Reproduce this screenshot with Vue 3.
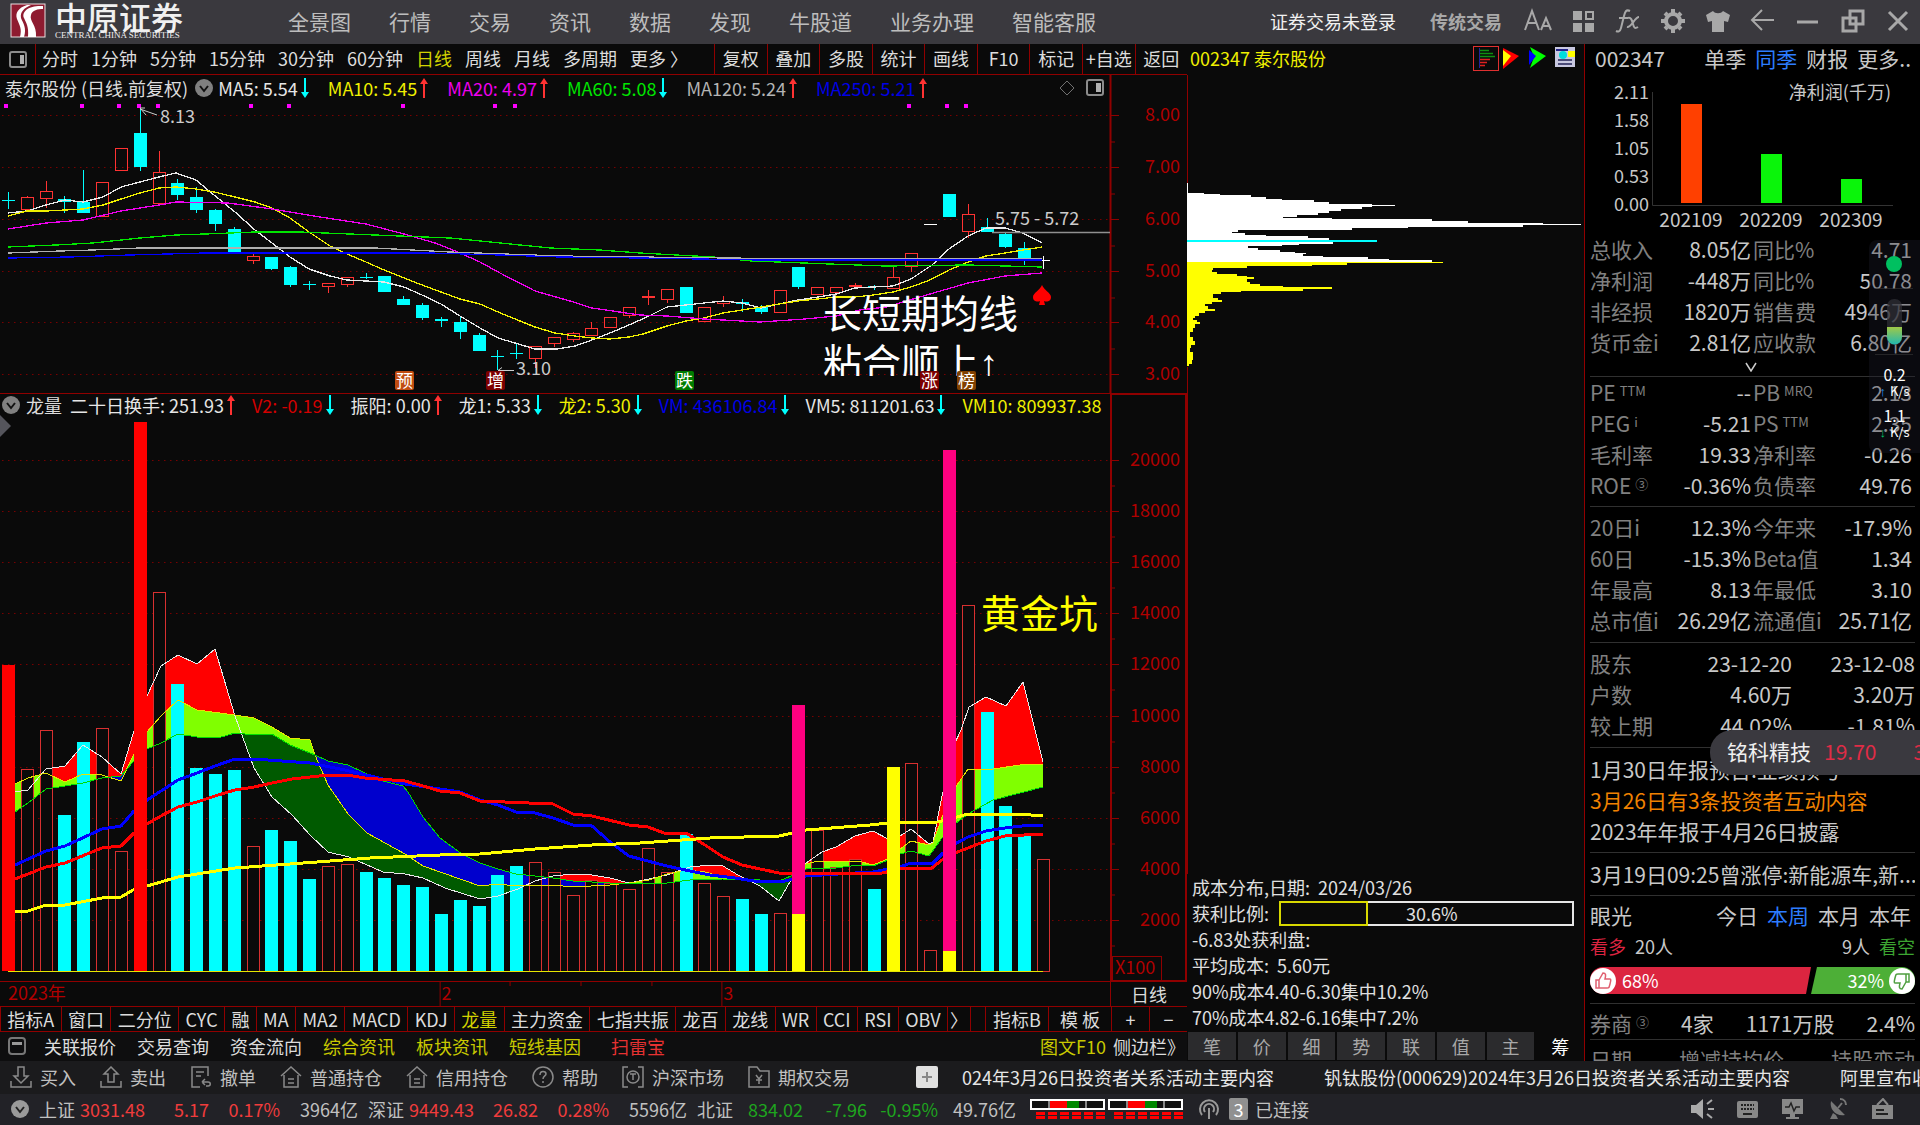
<script setup>
const nav = ['全景图', '行情', '交易', '资讯', '数据', '发现', '牛股道', '业务办理', '智能客服']
const periods = ['分时', '1分钟', '5分钟', '15分钟', '30分钟', '60分钟', '日线', '周线', '月线', '多周期', '更多 〉']
const tools = ['复权', '叠加', '多股', '统计', '画线', 'F10', '标记', '+自选', '返回']
const indicators = ['指标A', '窗口', '二分位', 'CYC', '融', 'MA', 'MA2', 'MACD', 'KDJ', '龙量', '主力资金', '七指共振', '龙百', '龙线', 'WR', 'CCI', 'RSI', 'OBV']
const sideTabs = ['笔', '价', '细', '势', '联', '值', '主', '筹']

const maLegend = [
  { text: 'MA5: 5.54', tone: 'white', dir: 'down' },
  { text: 'MA10: 5.45', tone: 'yellow', dir: 'up' },
  { text: 'MA20: 4.97', tone: 'magenta', dir: 'up' },
  { text: 'MA60: 5.08', tone: 'green', dir: 'down' },
  { text: 'MA120: 5.24', tone: 'gray', dir: 'up' },
  { text: 'MA250: 5.21', tone: 'blue', dir: 'up' }
]
const volLegend = [
  { text: '二十日换手: 251.93', tone: 'white', dir: 'up' },
  { text: 'V2: -0.19', tone: 'red', dir: 'down' },
  { text: '振阳: 0.00', tone: 'white', dir: 'up' },
  { text: '龙1: 5.33', tone: 'white', dir: 'down' },
  { text: '龙2: 5.30', tone: 'yellow', dir: 'down' },
  { text: 'VM: 436106.84', tone: 'blue', dir: 'down' },
  { text: 'VM5: 811201.63', tone: 'white', dir: 'down' },
  { text: 'VM10: 809937.38', tone: 'yellow', dir: '' }
]

const RED = '#ff3232'
const CYAN = '#00ffff'
const center = (i) => Math.round(8 + 18.82 * i)

/* kind, high, open/close top, open/close bottom, low */
const candles = [
  ['c', 192, 200, 201, 209], ['r', 196, 197, 210, 210], ['r', 181, 191, 199, 208], ['c', 196, 199, 202, 213],
  ['c', 170, 202, 213, 213], ['r', 182, 182, 217, 217], ['r', 148, 148, 171, 171], ['c', 108, 133, 167, 171],
  ['r', 151, 172, 204, 204], ['c', 179, 183, 195, 200], ['c', 187, 197, 210, 213], ['c', 209, 210, 224, 231],
  ['c', 227, 229, 252, 252], ['r', 254, 256, 261, 264], ['c', 257, 257, 269, 270], ['c', 266, 267, 285, 287],
  ['c', 281, 284, 285, 290], ['r', 283, 283, 287, 293], ['r', 277, 277, 285, 287], ['c', 273, 277, 278, 279],
  ['c', 276, 276, 292, 292], ['c', 296, 299, 305, 305], ['c', 303, 305, 318, 320], ['c', 317, 319, 321, 327],
  ['c', 317, 322, 332, 339], ['c', 333, 335, 351, 351], ['c', 350, 356, 357, 370], ['c', 344, 353, 354, 359],
  ['r', 346, 346, 359, 368], ['r', 337, 337, 344, 347], ['r', 332, 333, 340, 342], ['r', 322, 328, 336, 336],
  ['r', 317, 317, 328, 328], ['r', 307, 307, 316, 318], ['r', 290, 296, 298, 305], ['r', 289, 289, 300, 303],
  ['c', 287, 287, 313, 313], ['r', 307, 307, 322, 322], ['r', 296, 301, 304, 307], ['c', 299, 302, 304, 312],
  ['c', 305, 307, 312, 314], ['r', 290, 290, 313, 313], ['c', 267, 267, 287, 289], ['r', 287, 287, 295, 295],
  ['r', 287, 287, 293, 293], ['r', 283, 285, 287, 287], ['c', 285, 286, 287, 290], ['r', 266, 277, 289, 289],
  ['r', 253, 253, 267, 272], ['w', 225, 224, 225, 225], ['c', 194, 194, 217, 217], ['r', 204, 214, 232, 238],
  ['c', 218, 227, 232, 232], ['c', 232, 234, 247, 248], ['c', 242, 248, 258, 265], ['w', 256, 260, 261, 269]
].map(([kind, high, top, bottom, low], i) => ({
  x: center(i), kind, high, top, low, h: bottom - top, bottom,
  color: kind === 'r' ? RED : kind === 'c' ? CYAN : '#ffffff'
}))

const priceLines = [
  { color: '#e8e8e8', pts: '8,213 27,211 46,205 65,200 83,202 103,197 121,187 140,182 159,177 176,173 196,180 214,195 235,212 255,230 272,243 290,257 309,269 330,276 347,280 366,281 384,282 404,287 422,295 441,304 460,316 480,328 498,338 515,343 535,349 557,349 575,346 592,340 610,333 629,325 649,316 667,307 686,305 704,303 723,301 742,303 761,308 779,304 798,300 818,297 836,294 855,288 873,287 893,286 911,279 932,265 949,249 968,236 986,228 1005,228 1023,233 1042,243' },
  { color: '#f0f000', pts: '8,216 27,211 46,211 65,210 83,209 103,205 121,199 140,193 159,188 176,187 196,189 214,192 235,197 255,202 272,208 290,218 309,232 330,246 347,254 366,262 384,270 404,278 422,285 441,292 460,299 480,304 498,312 515,319 535,327 555,333 575,336 592,338 610,339 629,337 643,334 667,326 686,321 704,318 723,313 742,310 761,307 779,304 798,301 818,299 836,297 855,297 873,295 893,292 911,287 930,280 949,270 968,262 986,256 1005,253 1023,250 1042,247' },
  { color: '#f000f0', pts: '8,229 46,223 83,220 121,211 159,205 176,202 228,203 272,209 320,217 366,224 404,234 435,243 460,253 480,262 500,273 535,291 570,301 592,308 640,315 667,316 704,319 760,322 805,319 836,316 860,310 886,307 930,294 968,283 1005,276 1042,273' },
  { color: '#00e600', pts: '8,247 56,245 93,243 140,238 176,235 205,234 255,232 300,232 350,234 400,236 450,238 500,243 550,248 600,250 640,253 713,257 751,261 830,264 885,266 968,265 1042,267' },
  { color: '#b0b0b0', pts: '8,253 60,251 93,250 140,248 375,248 450,252 560,256 640,257 730,258 800,259 1042,259' },
  { color: '#0000ff', pts: '8,258 70,257 130,255 205,253 430,253 500,255 560,257 640,258 760,260 1042,260' }
]
const priceTicks = [[115, '8.00'], [167, '7.00'], [219, '6.00'], [271, '5.00'], [322, '4.00'], [374, '3.00']]
const dots = [6, 82, 119, 139, 158, 251, 289, 403, 495, 515, 909, 947, 966]
const badges = [[395, '预', '#c04c10'], [486, '增', '#7c0000'], [675, '跌', '#007c00'], [920, '涨', '#7c0000'], [957, '榜', '#804000']]

/* h hollow, c cyan, r red, y yellow, m magenta over yellow */
const bars = [
  ['r', 665], ['h', 769], ['h', 730], ['c', 815], ['c', 742], ['h', 728], ['h', 851], ['r', 422], ['h', 592], ['c', 684],
  ['c', 768], ['c', 774], ['c', 770], ['h', 846], ['c', 830], ['c', 841], ['c', 879], ['h', 866], ['h', 864], ['c', 872],
  ['c', 878], ['c', 885], ['c', 887], ['c', 914], ['c', 900], ['c', 906], ['c', 875], ['c', 866], ['h', 862], ['h', 872],
  ['h', 895], ['h', 880], ['h', 883], ['h', 889], ['h', 848], ['h', 872], ['c', 834], ['h', 883], ['h', 896], ['c', 899],
  ['c', 914], ['h', 913], ['m', 705, 914], ['h', 830], ['h', 867], ['h', 859], ['c', 889], ['y', 767], ['h', 763], ['h', 950],
  ['m', 450, 951], ['h', 605], ['c', 712], ['c', 806], ['c', 836], ['h', 859]
].map(([kind, top, split], i) => ({ kind, top, split, x: center(i) - 6 }))
const backBars = bars.filter((b) => b.kind === 'h' || b.kind === 'c')
const frontBars = bars.filter((b) => b.kind !== 'h' && b.kind !== 'c')
const solid = { r: '#ff0000', y: '#ffff00', m: '#ff0080' }

const fast = '15,792 28,790 46,769 65,766 83,745 102,757 121,774 133,734 147,696 161,666 178,655 197,664 215,649 235,716 254,768 272,797 292,815 310,835 328,852 349,857 383,872 405,874 423,878 445,888 480,899 498,896 518,889 535,881 553,876 573,874 592,875 610,878 629,883 649,879 667,875 690,867 710,865 723,866 738,875 760,886 779,901 791,880 806,863 822,852 836,847 855,836 873,831 888,839 900,836 911,829 929,844 933,842 942,796 955,743 961,730 969,707 986,697 1006,706 1023,682 1043,762'
const mid = '15,784 28,778 46,773 65,782 83,774 102,775 121,781 133,756 147,732 161,716 178,700 197,710 235,715 254,718 272,727 290,738 310,740 315,755 328,785 348,814 367,833 405,854 423,866 480,886 498,884 516,886 535,885 553,885 573,887 610,885 629,883 649,880 667,874 686,870 705,872 723,877 742,880 760,880 779,881 791,876 806,864 818,861 836,862 858,861 873,865 888,859 900,849 911,841 929,845 933,843 942,817 955,788 968,769 993,769 1020,765 1043,764'
const slow = '15,812 28,803 46,789 65,786 83,783 102,778 121,776 133,762 147,749 161,743 178,734 197,737 218,738 235,733 254,735 272,734 290,745 315,755 328,761 348,765 365,773 383,781 403,786 408,792 423,817 440,838 462,854 480,863 498,869 516,874 535,876 553,878 573,881 610,883 640,884 667,883 690,880 723,879 742,879 760,880 779,881 791,876 806,869 836,868 858,865 873,866 888,860 900,854 911,851 929,856 942,838 955,824 968,814 993,800 1020,793 1043,787'

const volLines = [
  { color: '#e8e8e8', w: 1, pts: fast },
  { color: '#e6e600', w: 1, pts: mid },
  { color: '#00dc00', w: 1, pts: slow },
  { color: '#0000ff', w: 3, pts: '15,865 46,851 65,846 102,829 121,826 133,812 147,800 161,791 178,780 197,773 215,766 235,759 268,760 310,763 345,770 383,779 405,784 440,789 460,792 480,800 498,805 516,812 535,813 553,818 573,825 592,826 610,842 629,856 640,859 667,866 690,871 710,875 735,878 760,882 785,881 806,876 838,874 873,872 888,869 900,867 911,863 932,864 942,854 955,844 968,837 986,831 1005,828 1030,825 1043,825' },
  { color: '#ff0000', w: 3, pts: '15,879 46,867 65,863 102,848 121,846 133,834 147,824 161,816 178,807 197,802 215,796 235,790 254,787 272,783 292,779 328,775 347,775 365,778 405,781 423,786 440,791 460,793 480,801 553,804 573,814 592,816 629,825 648,827 664,833 686,833 705,845 723,857 742,865 760,869 779,873 882,873 900,869 932,868 942,860 955,853 986,841 1005,836 1043,834' },
  { color: '#ffff00', w: 3, pts: '15,911 28,911 46,905 65,905 102,898 121,897 133,890 147,886 178,877 235,868 290,864 330,861 370,858 440,855 480,854 535,849 592,845 640,843 710,838 779,836 806,830 870,825 888,823 938,822 968,814 1018,814 1043,816' }
]

function sampler(str) {
  const p = str.split(' ').map((s) => s.split(',').map(Number))
  return (x) => {
    const k = p.findIndex((q) => q[0] >= x)
    if (k <= 0) return p[0][1]
    const [x0, y0] = p[k - 1]
    const [x1, y1] = p[k]
    return y0 + ((y1 - y0) * (x - x0)) / (x1 - x0)
  }
}

/* Ribbons between the three thin averages, one vertical stroke per pixel column */
const ribbons = { red: '', lime: '', blue: '', dark: '' }
const fa = sampler(fast)
const fb = sampler(mid)
const fc = sampler(slow)
for (let x = 15; x < 1043; x++) {
  const a = Math.round(fa(x))
  const b = Math.round(fb(x))
  const c = Math.round(fc(x))
  const col = (y0, y1) => `M${x + 0.5} ${y0}V${y1}`
  if (a < Math.min(b, c)) ribbons.red += col(a, Math.min(b, c))
  if (b < c) ribbons.lime += col(b, c)
  if (c < b) ribbons.blue += col(c, b)
  if (a > Math.max(b, c)) ribbons.dark += col(Math.max(b, c), a)
}
const volTicks = Array.from({ length: 10 }, (_, i) => ({ y: 460 + Math.round(51.1 * i), label: String(20000 - 2000 * i) }))

/* Cost distribution outline, stepped row by row */
function steps(rows) {
  return `M1187 ${rows[0][1]}` + rows.map(([x, y]) => `V${y}H${x}`).join('') + `V${rows[rows.length - 1][1] + 2}H1187Z`
}
const costWhite = steps([[1188, 183], [1188, 192], [1204, 193], [1220, 194], [1251, 195], [1266, 197], [1282, 199], [1314, 200], [1329, 202], [1372, 204], [1395, 205], [1372, 206], [1362, 207], [1341, 209], [1329, 211], [1318, 213], [1297, 215], [1283, 217], [1332, 218], [1432, 219], [1468, 221], [1543, 223], [1581, 224], [1523, 225], [1408, 227], [1352, 228], [1238, 230], [1232, 232], [1245, 233], [1266, 235], [1308, 236], [1329, 238], [1350, 240], [1333, 242], [1299, 244], [1282, 245], [1248, 246], [1258, 248], [1280, 250], [1295, 252], [1306, 253], [1303, 254], [1323, 256], [1368, 257], [1389, 259], [1432, 260]])
const costYellow = steps([[1443, 262], [1347, 263], [1312, 265], [1247, 266], [1213, 268], [1212, 270], [1217, 272], [1237, 274], [1247, 276], [1254, 277], [1247, 279], [1250, 282], [1260, 284], [1283, 286], [1332, 287], [1303, 289], [1241, 291], [1221, 292], [1213, 294], [1218, 298], [1222, 300], [1212, 302], [1205, 304], [1208, 306], [1215, 309], [1205, 311], [1199, 313], [1195, 316], [1193, 318], [1197, 320], [1200, 322], [1195, 324], [1193, 328], [1190, 332], [1193, 337], [1195, 341], [1191, 345], [1190, 348], [1193, 352], [1192, 360], [1189, 364]])

const finance = [
  ['总收入', '', '8.05亿', '同比%', '', '4.71'],
  ['净利润', '', '-448万', '同比%', '', '50.78'],
  ['非经损', '', '1820万', '销售费', '', '4946万'],
  ['货币金i', '', '2.81亿', '应收款', '', '6.80亿']
]
const ratios = [
  ['PE', 'TTM', '--', 'PB', 'MRQ', '2.13'],
  ['PEG', 'i', '-5.21', 'PS', 'TTM', '2.35'],
  ['毛利率', '', '19.33', '净利率', '', '-0.26'],
  ['ROE', '③', '-0.36%', '负债率', '', '49.76']
]
const market = [
  ['20日i', '', '12.3%', '今年来', '', '-17.9%'],
  ['60日', '', '-15.3%', 'Beta值', '', '1.34'],
  ['年最高', '', '8.13', '年最低', '', '3.10'],
  ['总市值i', '', '26.29亿', '流通值i', '', '25.71亿']
]
const holders = [['股东', '23-12-20', '23-12-08'], ['户数', '4.60万', '3.20万'], ['较上期', '44.02%', '-1.81%']]
const profit = [[1681, 104, '#ff4000', '202109'], [1761, 154, '#0af50a', '202209'], [1841, 179, '#0af50a', '202309']]

const trades = [['buy', '买入'], ['sell', '卖出'], ['cancel', '撤单'], ['home', '普通持仓'], ['home', '信用持仓'], ['help', '帮助'], ['market', '沪深市场'], ['option', '期权交易']]
const indices = [
  ['上证', '3031.48', '5.17', '0.17%', '3964亿', 'up'],
  ['深证', '9449.43', '26.82', '0.28%', '5596亿', 'up'],
  ['北证', '834.02', '-7.96', '-0.95%', '49.76亿', 'dn']
]
</script>

<template>
  <div class="app">
    <header class="top">
      <div class="brand">
        <svg width="36" height="35" viewBox="0 0 36 35">
          <rect x="1" y="1" width="34" height="33" fill="#8e1b30" stroke="#e8e0e0" stroke-width="1" />
          <path d="M33 3C20 2 11 8 14 15c2 5 5 8 4 19h8C27 22 19 18 21 12c1-5 7-6 12-6z" fill="#fff" />
          <path d="M17 2C8 5 5 10 7 16c3 7 5 10 3 18h4c3-9-1-14-3-19-1-6 3-10 10-13z" fill="#fff" />
        </svg>
        <div class="brand-text"><strong>中原证券</strong><small>CENTRAL CHINA SECURITIES</small></div>
      </div>
      <nav><button v-for="n in nav" :key="n">{{ n }}</button></nav>
      <div class="account"><button class="login">证券交易未登录</button><button class="classic">传统交易</button></div>
      <div class="sys">
        <button aria-label="字体"><svg width="30" height="26" viewBox="0 0 30 26"><path d="M2 22 9 3l7 19M5 15h8M18 22l5-12 5 12M20 18h6" /></svg></button>
        <button aria-label="布局"><svg width="24" height="26" viewBox="0 0 24 26"><path class="f" d="M2 3h9v9H2zM2 15h9v9H2zM14 15h9v9h-9z" /><path d="M15 4h7v7h-7z" /></svg></button>
        <button aria-label="公式"><svg width="26" height="26" viewBox="0 0 26 26"><path d="M15 3c-4-2-5 1-6 5L6 20c-1 4-3 4-5 3M4 10h9M13 10c3-1 4 2 5 6s2 5 5 3M24 9c-4 0-8 11-12 10" /></svg></button>
        <button aria-label="设置"><svg width="26" height="26" viewBox="0 0 26 26"><circle cx="13" cy="13" r="7" stroke-width="4" /><path stroke-width="4" d="M13 1v4M13 21v4M1 13h4M21 13h4M5 5l2 2M19 19l2 2M5 21l2-2M19 7l2-2" /></svg></button>
        <button aria-label="皮肤"><svg width="26" height="26" viewBox="0 0 26 26"><path class="f" d="M8 3c2 3 8 3 10 0l7 4-2 7-4-1v11H7V13l-4 1-2-7z" /></svg></button>
        <button aria-label="后退"><svg width="26" height="26" viewBox="0 0 26 26"><path d="M24 12H2M12 2 2 12l10 10" /></svg></button>
        <button aria-label="最小化"><svg width="24" height="26" viewBox="0 0 24 26"><path stroke-width="3" d="M1 14h21" /></svg></button>
        <button aria-label="还原"><svg width="24" height="26" viewBox="0 0 24 26"><path stroke-width="3" d="M9 3h13v13H9zM15 10H2v13h13z" /></svg></button>
        <button aria-label="关闭"><svg width="24" height="26" viewBox="0 0 24 26"><path stroke-width="3" d="m3 4 18 18M21 4 3 22" /></svg></button>
      </div>
    </header>

    <main class="body">
      <section class="charts">
        <div class="toolbar">
          <button class="pane" aria-label="分栏"><svg width="18" height="17" viewBox="0 0 18 17"><rect x="1" y="1" width="16" height="15" rx="2" fill="none" stroke="#8c8c8c" stroke-width="2" /><path d="M11 4h4v9h-4z" fill="#b0b0b0" /></svg></button>
          <div class="periods"><button v-for="p in periods" :key="p" :class="{ on: p === '日线' }">{{ p }}</button></div>
          <div class="tools"><button v-for="t in tools" :key="t">{{ t }}</button></div>
        </div>

        <div class="panel">
          <div class="legend price-legend">
            <span>泰尔股份 (日线.前复权)</span>
            <svg class="chev" width="18" height="18" viewBox="0 0 18 18"><circle cx="9" cy="9" r="9" fill="#808080" /><path d="m5 7 4 5 4-5" fill="none" stroke="#111" stroke-width="2" /></svg>
            <span v-for="m in maLegend" :key="m.text" :class="['val', m.tone]">{{ m.text }}<svg width="8" height="20" viewBox="0 0 8 20"><path v-if="m.dir === 'up'" d="M4 0 8 6H5v14H3V6H0z" fill="#ff3232" /><path v-else d="M4 20 8 14H5V0H3v14H0z" fill="#00ffff" /></svg></span>
            <svg class="tail" width="46" height="18" viewBox="0 0 46 18"><path d="m9 2 7 7-7 7-7-7z" fill="none" stroke="#707070" /><rect x="29" y="1" width="16" height="15" rx="2" fill="none" stroke="#8c8c8c" stroke-width="2" /><path d="M38 4h5v9h-5z" fill="#b0b0b0" /></svg>
          </div>
          <svg class="plot" viewBox="0 75 1187 318">
            <defs><clipPath id="note"><path d="M0 75h1110v301H0z" /></clipPath></defs>
            <g stroke="#780000" stroke-dasharray="1.5 4.5">
              <path v-for="t in priceTicks" :key="t[1]" :d="`M2 ${t[0] + .5}H1108`" />
            </g>
            <path d="M1110.5 75V393" stroke="#900000" stroke-width="2" />
            <g v-for="t in priceTicks" :key="t[1]">
              <path :d="`M1111 ${t[0] + .5}h8`" stroke="#900000" />
              <path v-if="t[0] < 374" :d="`M1111 ${t[0] + 27}h4`" stroke="#900000" />
              <text x="1180" :y="t[0] + 6" text-anchor="end" fill="#b00000">{{ t[1] }}</text>
            </g>
            <rect v-for="d in dots" :key="d" :x="d - 2" y="104" width="4" height="4" fill="#ff00ff" />
            <g shape-rendering="crispEdges">
              <g v-for="(c, i) in candles" :key="i">
                <path :d="`M${c.x + .5} ${c.high}V${c.top}M${c.x + .5} ${c.bottom}V${c.low}`" :stroke="c.color" />
                <rect v-if="c.kind === 'r' && c.h > 2" :x="c.x - 5.5" :y="c.top + .5" width="12" :height="c.h - 1" fill="none" :stroke="c.color" />
                <rect v-else :x="c.x - 6" :y="c.top" width="13" :height="c.h" :fill="c.color" />
              </g>
            </g>
            <polyline v-for="l in priceLines" :key="l.color" :points="l.pts" fill="none" :stroke="l.color" stroke-width="1.3" shape-rendering="crispEdges" />
            <path d="M992 232.500H1110" stroke="#909090" stroke-width="1.500" />
            <path d="M140 108l6 7m-6-7h5m-5 1 17 6M514 370.500h-16m4-3-4 3 4 3" fill="none" stroke="#ccc" />
            <g fill="#ccc"><text x="160" y="123">8.13</text><text x="516" y="375">3.10</text><text x="995" y="225">5.75 - 5.72</text></g>
            <path d="M1042 285c2 5 9 8 9 12 0 5-5 5-7 4l1 4h-6l1-4c-2 1-7 1-7-4 0-4 7-7 9-12z" fill="#f00" />
            <g clip-path="url(#note)" class="big" fill="#fff"><text x="823" y="328">长短期均线</text><text x="823" y="377">粘合顺上<tspan class="arrow">↑</tspan></text></g>
            <g v-for="b in badges" :key="b[1]">
              <rect :x="b[0]" y="371" width="19" height="19" rx="2" :fill="b[2]" />
              <text class="badge" :x="b[0] + 1" y="387" fill="#fff">{{ b[1] }}</text>
            </g>
          </svg>
        </div>

        <div class="panel">
          <div class="legend vol-legend">
            <svg class="chev" width="18" height="18" viewBox="0 0 18 18"><circle cx="9" cy="9" r="9" fill="#808080" /><path d="m5 7 4 5 4-5" fill="none" stroke="#111" stroke-width="2" /></svg>
            <span class="name">龙量</span>
            <span v-for="m in volLegend" :key="m.text" :class="['val', m.tone]">{{ m.text }}<svg v-if="m.dir" width="8" height="20" viewBox="0 0 8 20"><path v-if="m.dir === 'up'" d="M4 0 8 6H5v14H3V6H0z" fill="#ff3232" /><path v-else d="M4 20 8 14H5V0H3v14H0z" fill="#00ffff" /></svg></span>
          </div>
          <svg class="plot" viewBox="0 393 1187 589">
            <path d="M0 393.500H1110M0 981.500H1187" stroke="#900000" />
            <rect x="1111" y="394" width="75" height="587" fill="none" stroke="#900000" stroke-width="2" />
            <g v-for="t in volTicks" :key="t.y">
              <path :d="`M2 ${t.y + .5}H1108`" stroke="#780000" stroke-dasharray="1.5 4.5" />
              <path :d="`M1111 ${t.y + .5}h8M1111 ${t.y + 26}h4`" stroke="#900000" />
              <text x="1180" :y="t.y + 6" text-anchor="end" fill="#b00000">{{ t.label }}</text>
            </g>
            <path d="M0 415 11 426 0 437z" fill="#55555c" />
            <path :d="ribbons.red" stroke="#ff0000" />
            <path :d="ribbons.lime" stroke="#80ff00" />
            <path :d="ribbons.blue" stroke="#0000cd" />
            <path :d="ribbons.dark" stroke="#005a00" />
            <g v-for="b in backBars" :key="b.x">
              <rect v-if="b.kind === 'h'" :x="b.x + .5" :y="b.top + .5" width="12" :height="971 - b.top" fill="#0a0a0a" stroke="#d83030" />
              <rect v-else :x="b.x" :y="b.top" width="13" :height="971 - b.top" fill="#00ffff" />
            </g>
            <polyline v-for="l in volLines" :key="l.color" :points="l.pts" fill="none" :stroke="l.color" :stroke-width="l.w" shape-rendering="crispEdges" />
            <g v-for="b in frontBars" :key="b.x">
              <rect :x="b.x" :y="b.top" width="13" :height="971 - b.top" :fill="solid[b.kind]" />
              <rect v-if="b.split" :x="b.x" :y="b.split" width="13" :height="971 - b.split" fill="#ffff00" />
            </g>
            <path d="M8 971.500H1043" stroke="#e6e600" />
            <text class="big" x="981" y="628" fill="#ffff00">黄金坑</text>
            <rect x="1112.500" y="956.500" width="49" height="24" fill="none" stroke="#900000" />
            <text x="1115" y="974" fill="#b00000">X100</text>
          </svg>
        </div>

        <div class="timeline">
          <svg viewBox="0 982 1111 24">
            <path d="M440.500 982v24M722.500 982v24M510.500 982v4M581.500 982v4M652.500 982v4" stroke="#900000" />
            <g fill="#b00000"><text x="8" y="1000">2023年</text><text x="442" y="1000">2</text><text x="724" y="1000">3</text></g>
          </svg>
          <button>日线</button>
        </div>

        <div class="indicators">
          <div class="main-ind"><button v-for="n in indicators" :key="n" :class="{ on: n === '龙量' }">{{ n }}</button><button class="next" aria-label="更多指标">〉</button></div>
          <div class="side-ind"><button class="thin" aria-label="空"></button><button class="wide">指标B</button><button class="wide">模 板</button></div>
          <div class="zoom-ind"><button>+</button><button>−</button></div>
        </div>

        <div class="links">
          <svg width="18" height="18" viewBox="0 0 18 18"><rect x="1" y="1" width="16" height="16" rx="3" fill="none" stroke="#777" stroke-width="2" /><path d="M4 5h10v3H4z" fill="#999" /></svg>
          <button>关联报价</button><button>交易查询</button><button>资金流向</button>
          <button class="gold">综合资讯</button><button class="gold">板块资讯</button><button class="gold">短线基因</button>
          <button class="mine">扫雷宝</button>
          <button class="gold f10">图文F10</button><button class="fold">侧边栏》</button>
        </div>
      </section>

      <section class="cost">
        <div class="cost-head">
          <span>002347 泰尔股份</span>
          <svg width="104" height="26" viewBox="1472 46 104 26">
            <rect x="1473.500" y="47.500" width="25" height="24" fill="none" stroke="#e03030" />
            <path d="M1479.500 49v20" stroke="#222299" /><path d="M1480 51.500h9M1480 54.500h13M1480 57.500h15" stroke="#109010" stroke-width="1.500" /><path d="M1480 60.500h10M1480 63.500h7M1480 66.500h5" stroke="#e02020" stroke-width="1.500" />
            <path d="M1503 49 1519 57 1503 70z" fill="#f00" /><path d="M1503 51l8 6-8 10z" fill="#ff0" />
            <path d="M1530 48 1546 57 1530 69 1534 58z" fill="#0f0" /><path d="M1529 51l7 6-7 9z" fill="#00f" />
            <path d="M1555 48h20v20h-20z" fill="#c8c8e0" /><path d="M1556 50h12v2h-12z" fill="#228" /><circle cx="1563" cy="56" r="4" fill="#0dd" /><path d="M1568 52h7v6h-7z" fill="#ff0" /><path d="M1558 61h14M1558 65h14" stroke="#225" stroke-width="1.500" />
          </svg>
        </div>
        <svg class="plot" viewBox="1187 75 397 799" shape-rendering="crispEdges">
          <path :d="costWhite" fill="#fff" /><path :d="costYellow" fill="#ff0" />
          <path d="M1187 240.500H1377" stroke="#00ffff" stroke-width="2" />
          <path d="M1187.500 75v108M1187.500 367v507" stroke="#900000" />
        </svg>
        <div class="cost-text">
          <p>成本分布,日期: &nbsp;2024/03/26</p>
          <p class="ratio">获利比例: <span class="meter"><i></i><b>30.6%</b></span></p>
          <p>-6.83处获利盘:</p>
          <p>平均成本: &nbsp;5.60元</p>
          <p>90%成本4.40-6.30集中10.2%</p>
          <p>70%成本4.82-6.16集中7.2%</p>
        </div>
        <div class="side-tabs"><button v-for="s in sideTabs" :key="s" :class="{ on: s === '筹' }">{{ s }}</button></div>
      </section>

      <aside class="info">
        <div class="info-head"><span class="code">002347</span><button>单季</button><button class="on">同季</button><button>财报</button><button>更多..</button></div>
        <svg class="plot profit" viewBox="1585 76 335 158">
          <path d="M1652.500 92V205.500H1893" fill="none" stroke="#333" />
          <g text-anchor="end"><text x="1649" y="99">2.11</text><text x="1649" y="127">1.58</text><text x="1649" y="155">1.05</text><text x="1649" y="183">0.53</text><text x="1649" y="211">0.00</text></g>
          <text x="1891" y="99" text-anchor="end">净利润(千万)</text>
          <g v-for="p in profit" :key="p[0]"><rect :x="p[0]" :y="p[1]" width="21" :height="203 - p[1]" :fill="p[2]" /><text class="date" :x="p[0] + 10" y="227" text-anchor="middle">{{ p[3] }}</text></g>
        </svg>

        <dl v-for="(block, k) in [finance, ratios, market]" :key="k" :class="['pairs', 'block' + k]">
          <template v-for="(r, i) in block" :key="i">
            <div><dt>{{ r[0] }}<sup v-if="r[1]">{{ r[1] }}</sup></dt><dd>{{ r[2] }}</dd></div>
            <div><dt>{{ r[3] }}<sup v-if="r[4]">{{ r[4] }}</sup></dt><dd>{{ r[5] }}</dd></div>
          </template>
          <svg v-if="k === 0" class="more" width="12" height="10" viewBox="0 0 12 10"><path d="m1 1 5 8 5-8" fill="none" stroke="#ccc" stroke-width="1.500" /></svg>
        </dl>

        <table class="holders"><tbody><tr v-for="h in holders" :key="h[0]"><th scope="row">{{ h[0] }}</th><td>{{ h[1] }}</td><td>{{ h[2] }}</td></tr></tbody></table>

        <div class="news"><p>1月30日年报预告:业绩预亏</p><p class="hot">3月26日有3条投资者互动内容</p><p>2023年年报于4月26日披露</p></div>
        <div class="news"><p>3月19日09:25曾涨停:新能源车,新...</p></div>

        <div class="vote">
          <div class="vote-head"><span>眼光</span><button>今日</button><button class="on">本周</button><button>本月</button><button>本年</button></div>
          <div class="vote-num"><b class="bull">看多</b><span>20人</span><span class="right">9人</span><b class="bear">看空</b></div>
          <div class="vote-bar">
            <div class="bull-bar"><svg width="26" height="26" viewBox="0 0 26 26"><circle cx="13" cy="13" r="13" fill="#fff" /><path d="M6 12h3v8H6zM9 12l4-7c3 0 3 2 2 6h5c1 0 1 1 0 5s-1 4-3 4H9" fill="none" stroke="#e06070" stroke-width="1.500" /></svg>68%</div>
            <div class="bear-bar">32%<svg width="26" height="26" viewBox="0 0 26 26"><circle cx="13" cy="13" r="13" fill="#fff" /><path d="M17 6h3v8h-3zM17 14l-4 7c-3 0-3-2-2-6H6c-1 0-1-1 0-5s1-4 3-4h8" fill="none" stroke="#4f9f40" stroke-width="1.500" /></svg></div>
          </div>
        </div>
        <div class="broker"><span class="dim">券商<sup>③</sup></span><span>4家</span><span>1171万股</span><span>2.4%</span></div>
        <div class="broker dim"><span>日期</span><span>增减持均价</span><span>持股变动</span></div>

        <div class="float-net">
          <svg width="51" height="120" viewBox="1869 240 51 120">
            <defs><linearGradient id="cap" x2="0" y2="1"><stop offset="0" stop-color="#a0c848" /><stop offset="1" stop-color="#20b8b0" /></linearGradient></defs>
            <circle cx="1894" cy="264" r="8" fill="#00c060" /><rect x="1887" y="299" width="15" height="46" rx="7" fill="#303038" fill-opacity=".7" /><path d="M1887 327h15v10a7 7 0 0 1-15 0z" fill="url(#cap)" /><path d="M1875 288.500h38M1875 354.500h38" stroke="#333a" />
          </svg>
          <b>0.2</b><span><i class="u">↑</i>K/s</span><b>1.1</b><span><i class="d">↓</i>K/s</span>
        </div>
        <div class="float-stock"><span>铭科精技</span><b>19.70</b><b class="pct">3.58%</b></div>
      </aside>
    </main>

    <div class="trade">
      <button v-for="(t, i) in trades" :key="i">
        <svg width="22" height="22" viewBox="0 0 22 22">
          <path v-if="t[0] === 'buy'" d="M1 15v6h20v-6M8 1h6v9h4l-7 7-7-7h4z" />
          <path v-else-if="t[0] === 'sell'" d="M1 15v6h20v-6M8 16V8H4l7-7 7 7h-4v8z" />
          <path v-else-if="t[0] === 'cancel'" d="M10 21H2V1h16v9M6 6h8M6 10h5M12 16h6c3 0 3 4 0 4h-2m-4-4 3-3m-3 3 3 3" />
          <path v-else-if="t[0] === 'home'" d="M1 10 11 1l10 9M4 9v12h14V9M8 13h6M8 17h6" />
          <g v-else-if="t[0] === 'help'"><circle cx="11" cy="11" r="10" /><path d="M8 9c0-5 6-4 6-1 0 2-3 2-3 5M11 15v2" /></g>
          <g v-else-if="t[0] === 'market'"><path d="M6 1H1v20h5M16 1h5v20h-5" /><circle cx="11" cy="11" r="6" /><path d="M8 8h6M11 8v6" /></g>
          <path v-else d="M1 21V1h8l3 4h9v16zM8 9l3 4 3-4M11 13v5M8 14h6" />
        </svg>{{ t[1] }}
      </button>
      <button class="add" aria-label="添加"><svg width="22" height="22" viewBox="0 0 22 22"><rect width="22" height="22" rx="2" fill="#e0e0e0" stroke="none" /><path d="M11 6v10M6 11h10" stroke="#888" stroke-width="2" /></svg></button>
      <div class="marquee"><span>024年3月26日投资者关系活动主要内容</span><span>钒钛股份(000629)2024年3月26日投资者关系活动主要内容</span><span>阿里宣布收购</span></div>
    </div>

    <footer class="status">
      <svg width="18" height="18" viewBox="0 0 18 18"><circle cx="9" cy="9" r="9" fill="#9a9a9a" /><path d="m5 7 4 5 4-5" fill="none" stroke="#222" stroke-width="2" /></svg>
      <div v-for="x in indices" :key="x[0]" :class="['idx', x[5]]"><span>{{ x[0] }}</span><b>{{ x[1] }}</b><b class="chg">{{ x[2] }}</b><b class="pct">{{ x[3] }}</b><span class="amt">{{ x[4] }}</span></div>
      <svg width="154" height="22" viewBox="1032 1100 154 22">
        <g v-for="o in [0, 78]" :key="o" :transform="`translate(${o} 0)`">
          <rect x="1033" y="1102" width="73" height="9" fill="#111" stroke="#fff" stroke-width="2" />
          <path d="M1051 1102v9M1088 1102v9" stroke="#fff" /><path d="M1052 1103h17v7h-17z" fill="#f00" /><path d="M1069 1103h12v7h-12z" fill="#080" />
          <path d="M1038 1115.500h69M1038 1119.500h69" stroke="#f00" stroke-width="3" stroke-dasharray="9 3" />
        </g>
      </svg>
      <svg class="ant" width="22" height="22" viewBox="0 0 22 22"><path d="M11 10v11M7 14a5 5 0 1 1 8 0M4 17a9 9 0 1 1 14 0" fill="none" stroke="#999" stroke-width="2" /></svg>
      <em>3</em><span>已连接</span>
      <div class="tray">
        <svg width="24" height="22" viewBox="0 0 24 22"><path d="M1 7h5l7-6v20l-7-6H1z" fill="#aaa" /><path d="m17 6 5-4M18 11h6M17 16l5 4" stroke="#aaa" stroke-width="2" /></svg>
        <svg width="22" height="22" viewBox="0 0 22 22"><rect y="3" width="21" height="17" rx="2" fill="#888" /><path d="M4 7h13M4 11h13" stroke="#222" stroke-width="2" stroke-dasharray="2 1" /><path d="M6 16h9" stroke="#222" stroke-width="2" /></svg>
        <svg width="22" height="22" viewBox="0 0 22 22"><path d="M0 1h21v15H0zM8 16h5v3h4v2H4v-2h4z" fill="#888" /><path d="M3 9h4l2-4 3 8 2-4h4" fill="none" stroke="#222" stroke-width="1.500" /></svg>
        <svg width="22" height="22" viewBox="0 0 22 22"><path d="M4 3c-2 8 5 16 14 14zM6 15 3 21h8l-2-4z" fill="#777" /><path d="m11 10 4-5M13 1c4 0 6 3 6 6" fill="none" stroke="#777" stroke-width="2" /></svg>
        <svg width="22" height="22" viewBox="0 0 22 22"><path d="M0 7h21v14H0z" fill="#888" /><path d="m5 7 6-6 5 6" fill="none" stroke="#888" stroke-width="2" /><path d="M4 12h8M4 16h12" stroke="#222" stroke-width="2" /></svg>
      </div>
    </footer>
  </div>
</template>

<style>
body { margin: 0; background: #0a0a0a; }
</style>

<style scoped>
.app { display: flex; flex-direction: column; min-height: 100vh; overflow: hidden; background: #0a0a0a; color: #dcdcdc; font: 18px/24px "Noto Sans CJK SC", "Noto Sans", sans-serif; white-space: nowrap; }
button { background: none; border: 0; padding: 0; margin: 0; font: inherit; color: inherit; white-space: nowrap; }
p, dl, dd { margin: 0; }
b, em, i { font-weight: 400; font-style: normal; }
svg { flex: none; }
.plot { display: block; width: 100%; }
text { font-size: 18px; }
text.date { font-size: 19px; }
.big text, text.big { font-size: 39px; }
.arrow { font-family: "Liberation Sans", sans-serif; }
text.badge { font-size: 17px; }

.top { display: flex; align-items: center; height: 44px; box-sizing: border-box; padding-bottom: 2px; background: #3a393e; color: #bdbdbd; }
.brand { display: flex; gap: 9px; padding-left: 10px; width: 278px; box-sizing: border-box; }
.brand-text { display: flex; flex-direction: column; color: #f0f0f0; }
.brand-text strong { font-size: 32px; line-height: 27px; font-weight: 500; }
.brand-text small { font: 9px/10px "Liberation Serif", serif; }
nav { display: flex; gap: 38px; padding-left: 10px; font-size: 21px; }
.account { display: flex; gap: 34px; margin-left: auto; margin-right: 13px; }
.login { color: #f0f0f0; }
.classic { font-weight: 700; color: #a8a8a8; }
.sys { display: flex; }
.sys button { width: 45px; height: 40px; display: flex; align-items: center; justify-content: center; }
.sys svg { fill: none; stroke: #a8a8a8; stroke-width: 2; }
.sys .f { fill: #a8a8a8; stroke: none; }

.body { display: grid; grid-template-columns: minmax(0, 1187fr) minmax(0, 398fr) minmax(0, 335fr); }
.toolbar { display: flex; height: 31px; box-sizing: border-box; border-bottom: 1px solid #900000; }
.pane { width: 36px; border-right: 1px solid #900000; display: flex; align-items: center; justify-content: center; }
.periods { display: flex; align-items: center; gap: 13px; padding: 0 0 3px 6px; }
.on { color: #d2d200; }
.tools { display: flex; margin-left: auto; width: 473px; }
.tools button { flex: 1 1 0; min-width: 0; border-left: 1px solid #900000; padding-bottom: 3px; }

.panel { position: relative; }
.legend { position: absolute; left: 0; top: 0; width: 1110px; max-width: 93%; box-sizing: border-box; display: flex; align-items: center; overflow: hidden; }
.price-legend { height: 26px; padding-left: 5px; gap: 19px; }
.vol-legend { height: 24px; padding-left: 2px; gap: 17px; max-width: 94%; }
.price-legend .chev { margin: 0 -14px 0 -12px; }
.vol-legend .chev { margin-right: -11px; }
.vol-legend .name { margin-right: -9px; }
.val { display: inline-flex; align-items: center; gap: 3px; }
.tail { margin-left: auto; }
.white { color: #e6e6e6; } .yellow { color: #f0f000; } .magenta { color: #f000f0; } .green { color: #00e600; }
.gray { color: #b4b4b4; } .blue { color: #0000e6; } .red { color: #d20000; }

.timeline { display: flex; height: 24px; }
.timeline svg { flex: 1111 1 0; min-width: 0; }
.timeline button { flex: 76 1 0; border-left: 1px solid #900000; }
.cost { display: flex; flex-direction: column; box-sizing: border-box; border-right: 1px solid #900000; }
.indicators { display: flex; height: 26px; box-sizing: border-box; border: solid #900000; border-width: 1px 0; }
.indicators div { display: flex; min-width: 0; }
.indicators button { flex: 1 1 auto; border-left: 1px solid #900000; }
.main-ind { flex: 970 1 0; }
.indicators .next { flex: 0 0 23px; overflow: hidden; }
.side-ind { flex: 141 1 0; }
.indicators .wide { flex: 1 1 0; }
.indicators .thin { flex: 0 0 15px; }
.zoom-ind { flex: 76 1 0; }
.zoom-ind button { flex: 1 1 0; }
.links { display: flex; align-items: center; height: 29px; box-sizing: border-box; padding: 0 2px 2px 8px; background: #0e0e0f; }
.links svg { margin-right: 18px; }
.links button { margin-right: 21px; }
.links .mine { color: #e63232; margin-left: 9px; }
.gold { color: #c8c800; }
.links .f10 { margin-left: auto; margin-right: 7px; }
.links .fold { margin-right: 0; }

.cost-head { display: flex; align-items: center; height: 31px; box-sizing: border-box; padding: 0 8px 3px 3px; color: #f0f000; }
.cost-head svg { margin-left: auto; }
.cost-text { padding-left: 5px; line-height: 26px; color: #e0e0e0; }
.ratio { display: flex; align-items: center; gap: 10px; padding-right: 10px; }
.meter { position: relative; flex: 1; height: 25px; box-sizing: border-box; border: 2px solid #e6e6e6; display: flex; }
.meter i { width: 30.6%; margin: -2px 0 -2px -2px; border: 2px solid #d8d800; box-sizing: border-box; }
.meter b { margin-left: 38px; line-height: 21px; }
.side-tabs { display: flex; gap: 2px; flex: 1; padding: 2px 0 1px 1px; }
.side-tabs button { flex: 1 1 0; background: #2b2b2d; color: #a8a8a8; }
.side-tabs .on { background: none; color: #fff; }

.info { position: relative; height: 0; min-height: 100%; overflow: hidden; background: #000; font-size: 21px; color: #c8c8c8; line-height: 31px; }
.info .on { color: #2d7dff; }
.info-head { display: flex; gap: 9px; height: 32px; padding: 0 9px 0 10px; line-height: 29px; }
.info-head .code { margin-right: auto; }
.info-head button { height: 29px; }
.profit { fill: #c8c8c8; }
.pairs { display: grid; grid-template-columns: 161px 1fr; column-gap: 2px; margin: 0 5px; padding: 5px 3px 6px 0; border-bottom: 1px solid #303030; }
.block0 { padding: 0 3px 0 0; }
.block1 { padding-top: 0; padding-bottom: 5px; }
.pairs div { display: flex; justify-content: space-between; }
dt, th, .dim { color: #808080; font-weight: 400; }
sup { font-size: 13px; line-height: 1; vertical-align: 5px; margin-left: 4px; }
.more { grid-column: 1 / -1; justify-self: center; margin: 4px 0; }
.holders { width: calc(100% - 10px); margin: 0 5px; border-collapse: separate; border-spacing: 0; padding: 5px 0 6px; border-bottom: 1px solid #303030; }
.holders th, .holders td { padding: 0; text-align: right; width: 123px; }
.holders th { text-align: left; width: auto; }
.news { margin: 0 5px; padding: 6px 0 5px; border-bottom: 1px solid #303030; }
.news p { overflow: hidden; }
.hot { color: #f08200; }
.vote { margin: 0 5px; padding: 4px 0 9px; border-bottom: 1px solid #303030; }
.vote-head { display: flex; gap: 9px; padding-right: 4px; }
.vote-head span { margin-right: auto; }
.vote-num { display: flex; gap: 9px; font-size: 18px; }
.right { margin-left: auto; }
.bull { color: #dc2440; }
.bear { color: #3ca532; }
.vote-bar { display: flex; margin-top: 5px; font-size: 18px; line-height: 27px; color: #fff; }
.bull-bar { flex: 68; display: flex; align-items: center; gap: 6px; height: 27px; background: #dc2540; border-radius: 13px 0 0 13px; clip-path: polygon(0 0, 100% 0, calc(100% - 5px) 100%, 0 100%); }
.bear-bar { flex: 32; display: flex; align-items: center; justify-content: flex-end; gap: 5px; height: 27px; background: #4daf37; border-radius: 0 13px 13px 0; clip-path: polygon(6px 0, 100% 0, 100% 100%, 0 100%); }
.broker { display: flex; justify-content: space-between; margin: 0 5px; padding-top: 4px; height: 31px; border-bottom: 1px solid #303030; }
.float-net { position: absolute; right: 0; top: 196px; width: 51px; height: 213px; background: rgba(28, 30, 42, .35); border-radius: 8px 0 0 8px; display: flex; flex-direction: column; align-items: center; color: #fff; line-height: 18px; font-size: 13px; }
.float-net svg { margin-bottom: 5px; }
.float-net b { font-size: 16px; line-height: 18px; }
.float-net span { line-height: 16px; margin-bottom: 6px; }
.float-net i { font-family: "Liberation Sans", sans-serif; font-weight: 700; margin-right: 4px; }
.u { color: #20a0ff; } .d { color: #00c864; }
.float-stock { position: absolute; right: 0; top: 686px; width: 210px; height: 45px; box-sizing: border-box; padding: 0 0 2px 17px; border-radius: 22px 0 0 22px; background: #3a393f; display: flex; gap: 13px; align-items: center; overflow: hidden; color: #f0f0f0; }
.float-stock b { color: #e02c46; }
.float-stock .pct { margin-left: 24px; }

.trade { display: flex; align-items: center; height: 33px; box-sizing: border-box; padding: 0 0 2px 10px; background: #1b1b1d; gap: 24px; color: #c0c0c0; }
.trade button { display: flex; align-items: center; gap: 8px; flex: none; }
.trade svg { fill: none; stroke: #8a8a8a; stroke-width: 1.5; }
.trade .add { margin-left: 42px; }
.marquee { display: flex; gap: 50px; flex: 1; min-width: 0; overflow: hidden; color: #e6e6e6; }
.marquee span { flex: none; }
.status { display: flex; align-items: center; height: 31px; box-sizing: border-box; padding: 0 26px 2px 11px; background: #222227; color: #c0c0c0; }
.idx { display: flex; margin-left: 10px; }
.idx b { color: #f03c3c; }
.idx.dn b { color: #1ea51e; }
.idx b:nth-of-type(1) { width: 70px; text-align: right; }
.idx .chg { width: 64px; text-align: right; }
.idx .pct { width: 71px; text-align: right; }
.idx .amt { width: 78px; text-align: right; }
.status > svg:nth-of-type(2) { margin-left: 14px; }
.ant { margin: 0 9px 0 14px; }
.status em { width: 19px; height: 22px; line-height: 22px; text-align: center; background: #909090; color: #fff; border-radius: 2px; margin-right: 7px; }
.tray { display: flex; gap: 23px; margin-left: auto; }
</style>
